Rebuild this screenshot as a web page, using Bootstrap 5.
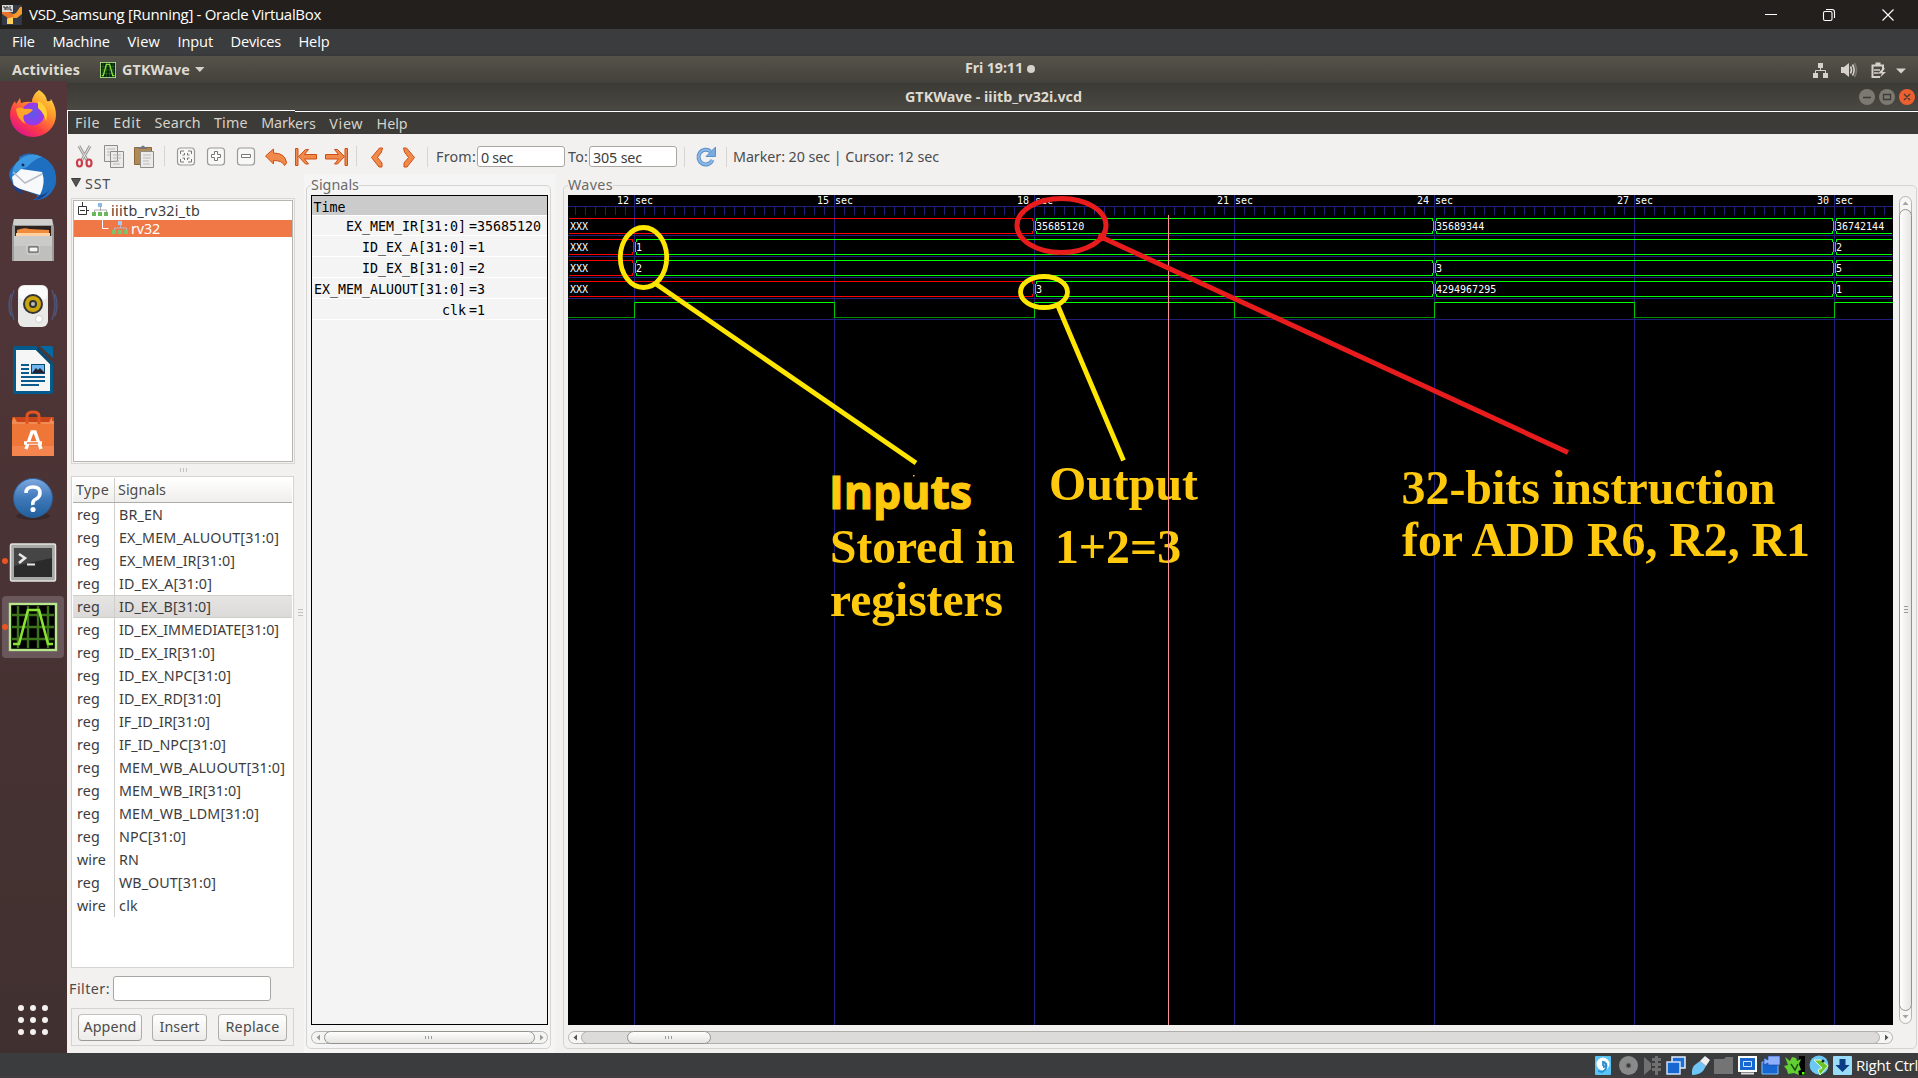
<!DOCTYPE html>
<html lang="en">
<head>
<meta charset="utf-8">
<title>VSD_Samsung [Running] - Oracle VirtualBox</title>
<link href="https://cdn.jsdelivr.net/npm/bootstrap@5.3.0/dist/css/bootstrap.min.css" rel="stylesheet">
<style>
html,body{height:100%;overflow:hidden}
body{font-family:"Noto Sans","Open Sans",sans-serif;font-size:14.3px;line-height:20px;color:#4c4c4c;background:#3b3c3e}
svg{display:block;flex:none}
.fit{display:block;flex:none;white-space:nowrap}
.host-title{height:29px;background:#231f1c;color:#fff;padding:0 23px 0 2px;font-family:"Open Sans",sans-serif;font-size:15px}
.host-title .fit{margin:-2px 0 0 7px}
.host-menu{height:27px;background:#3b3c3e;color:#fff;padding:0 0 1px 12px;gap:17.5px;border-bottom:2px solid #38393a;font-family:"Open Sans",sans-serif;font-size:14.6px}
.topbar{height:27px;background:linear-gradient(#56534a,#42413b);color:#dfdbd2;font-weight:700}
.topbar .side{width:965px;flex:none}
.guest{height:970px}
.launcher{width:67px;height:972px;margin-top:-2px;background:linear-gradient(#533639,#40302f 100%);flex:none}
.launcher svg{width:67px;height:64.2px}
.win-title{height:27px;background:linear-gradient(#3b3a35,#4a4842);color:#dfdbd2;font-weight:700}
.menu-strip{height:24px;color:#d6d2ca}
.menu-part{height:24px;background:#3c3b37;border-top:1px solid #fff;gap:13.3px}
.menu-part.one{width:228px;border-left:1px solid #fff;padding-left:7px;overflow:hidden}
.menu-part.two{margin-top:1px}
.tools{height:40px;background:#f2f1f0;padding:5px 0 0 8px}
.sep{width:1px;height:20px;background:#d8d6d3;flex:none}
.field{height:21px;background:#fff;border:1px solid #a9a7a3;border-radius:3px;line-height:21px;padding-left:3px;color:#3c3c3c;flex:none}
.work{background:#f2f1f0;min-height:0}
.left{width:237px;flex:none;padding-left:4px}
.tree{width:224px;height:266px;border:1px solid #d9d7d4;padding:1px;background:#f4f3f2;margin-top:4px}
.tree-in{height:262px;background:#fff;border:1px solid #b7b5b0;padding-top:1px}
.tree-in div{height:18px;line-height:18px;color:#3c3c3c}
.tree-in .sel{background:#f07746;color:#fff;height:17px;line-height:17px}
.siglist{width:223px;height:492px;border:1px solid #d6d4d1;background:#fff;padding:1px;color:#3c3c3c}
.sig-head{height:25px;background:linear-gradient(#fff,#efeeec);border-bottom:1px solid #aeaca6;color:#4c4c4c}
.sig-row{height:23px}
.c1{width:42px;padding-left:4px;border-right:1px solid #d0cecb;flex:none;height:100%;display:flex;align-items:center}
.sig-head .c1{padding-left:3px}
.c2{padding-left:4px;height:100%;display:flex;align-items:center}
.sig-head .c2{padding-left:3px}
.sig-row.on{background:linear-gradient(#e6e5e3,#dbdad8);border-top:1px solid #cfcecb;border-bottom:1px solid #cfcecb}
.actions{width:223px;height:38px;border:1px solid #d6d4d1;margin-top:7px;padding-left:6px}
.gbtn{height:27px;border:1px solid #b1afaa;border-color:#c4c2be #b1afaa #9c9a95;border-radius:4px;background:linear-gradient(#fff,#ecebe9);color:#4c4c4c;padding:0;display:flex;align-items:center;justify-content:center;font-size:14.3px;flex:none}
.pane-a{width:251px;background:#f5f5f5;padding:1px 4px 5px 2px;flex:none}
.pane-b{padding:1px 1px 5px 8px}
.legend{height:20px;line-height:20px;padding:0 1px 0 5px;color:#6a6a6a;position:relative;z-index:1}
.pane-a .legend .fit{background:#f5f5f5}
.pane-b .legend .fit{background:#f2f1f0}
.frame{border:1px solid #d6d4d1;border-radius:5px;margin-top:-10px;height:864px;padding:9px 3px 0 4px}
.sigbox{width:237px;height:830px;border:1px solid #000;background:#f4f4f4}
.hbar{height:13px;margin-top:6px}
.mono{font-family:"DejaVu Sans Mono",monospace;font-size:10px;fill:#fff}
.note{font-family:"Liberation Serif",serif;font-weight:700;font-size:49px;fill:#ffc90e}
.note .sans{font-family:"Open Sans",sans-serif;font-size:47px;stroke:#ffc90e;stroke-width:1.2px}
.status{height:24px;padding-left:1594px;color:#fff;font-family:"Open Sans",sans-serif;font-size:15px;overflow:hidden;border-bottom:1px solid #4a3b3d;gap:4px}
</style>
<script src="https://cdn.jsdelivr.net/npm/bootstrap@5.3.0/dist/js/bootstrap.bundle.min.js"></script>
</head>
<body class="d-flex flex-column">

<header class="host-title d-flex align-items-center flex-shrink-0">
  <svg width="20" height="20" viewBox="0 0 20 20"><rect width="20" height="20" fill="#323a48"/><path d="M5 19V14Q5 11 9 10L14 8L18 2H20V9L15 13H11V19Z" fill="#f59a2c"/><path d="M5 19V15Q7 12 11 12V19Z" fill="#ffd15c"/><path d="M0 5L10 8L12 12L6 13L0 9Z" fill="#e8742a"/><rect width="11" height="7" fill="#d9d9d9"/><path d="M1 2h2v3M4 5V2h2v3M8 1v4h2" stroke="#333" fill="none"/></svg>
  <span class="fit" data-w="292">VSD_Samsung [Running] - Oracle VirtualBox</span>
  <svg class="ms-auto" width="130" height="20" viewBox="1765 4 130 20" fill="none" stroke="#fff" stroke-width="1.1"><path d="M1765 13.500h12M1882.500 8.500l11 11M1893.500 8.500l-11 11"/><rect x="1823.500" y="10.500" width="8.500" height="9" rx="1.500"/><path d="M1826 8.500h6q2.500 0 2.500 2.500v6"/></svg>
</header>

<nav class="host-menu d-flex align-items-center flex-shrink-0">
  <span class="fit" data-w="23">File</span><span class="fit" data-w="57.500">Machine</span><span class="fit" data-w="32.500">View</span><span class="fit" data-w="35.500">Input</span><span class="fit" data-w="50.500">Devices</span><span class="fit" data-w="31">Help</span>
</nav>

<div class="topbar d-flex align-items-center flex-shrink-0">
  <div class="side d-flex align-items-center">
    <span class="fit" data-w="68" style="margin-left:12px">Activities</span>
    <svg style="margin-left:20px" width="16" height="16" viewBox="0 0 48 48"><rect x="1" y="1" width="46" height="46" fill="#021" stroke="#b6e98b" stroke-width="3"/><path d="M4 14h40M4 24h40M4 35h40M19 3v42M29 3v42M39 3v42M9 3v42" stroke="#39701c" stroke-width="2"/><path d="M5 41h5L19 7h10l9 34h6" stroke="#8ae234" stroke-width="4" fill="none"/></svg>
    <span class="fit" data-w="68" style="margin-left:6px">GTKWave</span>
    <svg style="margin-left:5px" width="10" height="5" viewBox="0 0 10 5"><path d="M0 0h9.500L4.800 5z" fill="#d6d2ca"/></svg>
  </div>
  <div class="d-flex align-items-center" style="margin-top:-4px"><span class="fit" data-w="58">Fri 19:11</span><svg width="14" height="12" viewBox="0 0 14 12"><circle cx="8" cy="7" r="4" fill="#d6d2ca"/></svg></div>
  <div class="ms-auto">
    <svg width="106" height="18" viewBox="1812 60 106 18"><g fill="#d6d2ca"><path d="M1818 62h5v5h-5zM1813 72h5v5h-5zM1823 72h5v5h-5zM1896 67.500h10l-5 5z"/><path d="M1841 66h3l5-4v14l-5-4h-3z"/></g><g fill="none" stroke="#d6d2ca" stroke-width="1.600"><path d="M1815.500 72v-2.500h10V72M1820.500 67v3" stroke-width="1"/><path d="M1850.500 65.500q2 3.500 0 7"/><path d="M1852.500 63.500q3.200 5.500 0 11"/><path d="M1854.500 62q4 7 0 14" stroke="#77756d"/><path d="M1880 76h-7.500V64.500h10.500v4M1875.500 62.500h5" stroke-width="2"/><path d="M1874 69h6M1874 72h4.500" /></g><path d="M1883 67l-5 5.500h4l-2 4 6-5.500h-3.500l2.500-4z" fill="#d6d2ca"/></svg>
  </div>
</div>

<div class="guest d-flex flex-shrink-0">
  <aside class="launcher d-flex flex-column">
    <svg viewBox="0 0 67 64.200">
      <defs><linearGradient id="ff" x1="1" y1="0" x2=".3" y2="1"><stop offset="0" stop-color="#fff44f"/><stop offset=".4" stop-color="#ff9a2a"/><stop offset=".75" stop-color="#ff3a47"/><stop offset="1" stop-color="#e0158a"/></linearGradient><radialGradient id="fp"><stop offset="0" stop-color="#5b5bea"/><stop offset="1" stop-color="#a034e8"/></radialGradient></defs>
      <path d="M39 9Q46 13 47 20Q51 21 51 18Q56 26 56 34A23 22 0 0 1 10 34Q10 26 15 20L16 23L20 17L21 22Q27 20 32 21Q32 14 39 9Z" fill="url(#ff)"/><circle cx="33" cy="33" r="11.500" fill="url(#fp)"/><path d="M16 28Q20 25 25 28Q30 27 33 29Q28 34 24 34Q22 38 26 43Q17 39 16 28Z" fill="#ffa52c"/><path d="M38 20Q50 26 46 40Q44 32 38 27Z" fill="#ffcf33"/></svg>
    <svg viewBox="0 0 67 64.200">
      <path d="M19 12Q26 7 33 9Q50 12 55 26Q59 40 50 49Q43 56 33 55Q38 53 37 50L15 42Q9 34 9 28Q12 20 19 17Z" fill="#1f6fc0"/><path d="M16 18Q28 5 42 12Q34 14 27 22Q18 24 12 32Q12 24 16 18Z" fill="#3a97e0"/><path d="M12 32L21 24L42 27Q46 38 40 50L14 42Z" fill="#f8f9fb"/><path d="M13 27L25 38L42 29" stroke="#b4bcc8" fill="none" stroke-width="1.500"/><path d="M12 39q4 9 11 10l-2-4zM40 50q8 0 12-10q-6 14-17 15z" fill="#1b3f8b"/><circle cx="23" cy="20" r="1.500" fill="#0b2c60"/></svg>
    <svg viewBox="0 0 67 64.200">
      <path d="M14 10h38l2 8v34H12V18z" fill="#9d9d9b"/><path d="M14 10h38l1 6H13z" fill="#cfcfcd"/><rect x="15" y="17" width="36" height="10" fill="#2d2320"/><path d="M17 21q8-3 12-1l20 1v6H17z" fill="#f08b3c"/><path d="M16 24h34v3H16z" fill="#ffd0a0"/><path d="M14 27h38v25H14z" fill="#bfbfbd"/><path d="M14 27h38v10H14z" fill="#cacac8"/><rect x="27" y="36" width="12" height="9" rx="2" fill="#a9a9a7" stroke="#dcdcdc"/><rect x="29" y="38" width="9" height="5" fill="#f4f4f4" stroke="#555"/></svg>
    <svg viewBox="0 0 67 64.200">
      <path d="M14 16q-6 14 0 30M11 20q-4 11 0 22M52 16q6 14 0 30M55 20q4 11 0 22" stroke="#4d5478" fill="none" stroke-width="1.500"/><rect x="18" y="11" width="30" height="42" rx="6" fill="#e9e9e7"/><rect x="19" y="12" width="28" height="14" rx="5" fill="#fbfbfb"/><circle cx="33" cy="30" r="10" fill="#333"/><circle cx="33" cy="30" r="8" fill="#c9a50e"/><circle cx="33" cy="30" r="4" fill="#333"/><circle cx="33" cy="30" r="2" fill="#bbb"/><circle cx="39" cy="45" r="3.500" fill="#fff" stroke="#ccc"/></svg>
    <svg viewBox="0 0 67 64.200">
      <path d="M15 8h21l17 17v29q0 2-2 2H15q-2 0-2-2V10q0-2 2-2z" fill="#055a8c"/><path d="M40 8h11q2 0 2 2v10z" fill="#0369a3"/><path d="M16 12h20l14 14v27H16z" fill="#f6f6f6"/><path d="M36 12l14 14h3L38 9z" fill="#0a4a70"/><path d="M21 27h8M21 31h8M21 35h8M21 39h24M21 43h24M21 47h18" stroke="#0b5b8d" stroke-width="2"/><rect x="31.500" y="26.500" width="13" height="9" fill="#6fb7ee" stroke="#0b4a70"/><path d="M32 35l4-5 2 2 2-2 5 5z" fill="#223"/></svg>
    <svg viewBox="0 0 67 64.200">
      <path d="M12 15h42v39H12z" fill="#ee7738"/><path d="M12 15h42v6H12z" fill="#c9461a"/><path d="M14 15l3 5h32l3-5v4h2v3H12v-3z" fill="#f28b52"/><path d="M12 44h42v10H12z" fill="#f4854f"/><path d="M27 22v-8q0-4 6-4t6 4v8" stroke="#df5420" stroke-width="3" fill="none"/><path d="M26 47L32 30h3L41 47M24 41h18" stroke="#fff" stroke-width="3.400" fill="none"/><path d="M27 41h11" stroke="#f07030" stroke-width="1.500"/></svg>
    <svg viewBox="0 0 67 64.200">
      <defs><linearGradient id="hp" x1="0" y1="0" x2="0" y2="1"><stop offset="0" stop-color="#7fa8e0"/><stop offset=".5" stop-color="#3f79ba"/><stop offset="1" stop-color="#215f9b"/></linearGradient></defs>
      <ellipse cx="33" cy="50" rx="17" ry="4" fill="#2e2224" opacity=".6"/><circle cx="33" cy="32" r="19.500" fill="url(#hp)" stroke="#2a5f97"/><path d="M26 27q0-6 7-6t7 6q0 4-4 6t-3 6" stroke="#fff" stroke-width="3.600" fill="none"/><circle cx="33" cy="43.500" r="2.600" fill="#fff"/></svg>
    <svg viewBox="0 0 67 64.200">
      <circle cx="5" cy="31" r="3" fill="#e95420"/><rect x="10.500" y="14" width="45" height="37" rx="1.500" fill="#a8a8a6" stroke="#e4e4e2" stroke-width="1.500"/><rect x="14" y="18" width="38" height="29" fill="#2b2b2b"/><path d="M14 18h38v10L14 36z" fill="#454545"/><path d="M19 24l6 4-6 5" stroke="#e8e8e6" stroke-width="2.600" fill="none"/><path d="M27 34.500h8" stroke="#e8e8e6" stroke-width="2"/></svg>
    <svg viewBox="0 0 67 64.200">
      <rect x="2" y="1" width="62" height="62" rx="4" fill="#6a575b"/><circle cx="5" cy="32" r="3" fill="#e95420"/><rect x="10" y="9" width="46" height="46" fill="#000" stroke="#b9e78d" stroke-width="2.400"/><path d="M12 20h42M12 32h42M12 44h42M28 11v42M38 11v42M48 11v42M18 11v42" stroke="#3d7419" stroke-width="2.400"/><path d="M13 49h6L28 15h11l9 34h5" stroke="#8ae234" stroke-width="2.600" fill="none"/></svg>
    <svg class="mt-auto" style="height:64px" viewBox="0 0 67 64"><g fill="#f2f1f0"><circle cx="21" cy="19" r="3"/><circle cx="33" cy="19" r="3"/><circle cx="45" cy="19" r="3"/><circle cx="21" cy="31" r="3"/><circle cx="33" cy="31" r="3"/><circle cx="45" cy="31" r="3"/><circle cx="21" cy="43" r="3"/><circle cx="33" cy="43" r="3"/><circle cx="45" cy="43" r="3"/></g></svg>
  </aside>

  <main class="d-flex flex-column flex-grow-1" style="min-width:0">
    <div class="win-title d-flex align-items-center justify-content-between flex-shrink-0">
      <span style="width:838px"></span><span class="fit" data-w="177">GTKWave - iiitb_rv32i.vcd</span>
      <div class="d-flex justify-content-end" style="width:836px"><svg width="60" height="18" viewBox="1858 88 60 18"><circle cx="1867" cy="97" r="8" fill="#7c7972"/><circle cx="1887" cy="97" r="8" fill="#7c7972"/><circle cx="1907" cy="97" r="8" fill="#ee5f30"/><path d="M1863 97.500h8M1883.500 94.500h7v5h-7zM1904 94l6 6M1910 94l-6 6" stroke="#3c3b37" fill="none" stroke-width="1.300"/></svg></div>
    </div>
    <nav class="menu-strip d-flex flex-shrink-0">
      <div class="menu-part one d-flex align-items-center"><span class="fit" data-w="25">File</span><span class="fit" data-w="28">Edit</span><span class="fit" data-w="46">Search</span><span class="fit" data-w="34">Time</span><span class="fit" data-w="34">Mark</span></div>
      <div class="menu-part two d-flex align-items-center flex-grow-1"><span class="fit" data-w="21">ers</span><span class="fit" data-w="34">View</span><span class="fit" data-w="31">Help</span></div>
    </nav>
    <div class="tools d-flex flex-shrink-0 align-items-center">
      <svg width="352" height="24" viewBox="75 145 352 24">
        <g fill="none">
        <path d="M79 146l8 14M90 146l-8 14" stroke="#9b9b99" stroke-width="3"/><path d="M79 146l8 14M90 146l-8 14" stroke="#e4e4e2" stroke-width="1"/><ellipse cx="79.500" cy="163" rx="2.500" ry="3.500" stroke="#c9404c" stroke-width="2.200"/><ellipse cx="89" cy="163" rx="2.500" ry="3.500" stroke="#c9404c" stroke-width="2.200"/>
        <g fill="#ecebe9" stroke="#8d8d89"><path d="M104.500 145.500h13v16h-13zM110.500 151.500h13v16h-13z"/><path d="M107 149h8M107 152h3M107 155h3M113 155h8M113 158h8M113 161h6M113 164h7" stroke="#b9b9b6"/></g>
        <path d="M134.500 147.500h17v17h-17z" fill="#b08a56" stroke="#8a6738"/><path d="M138 149v-2h3q2-3 4 0h2v2z" fill="#777"/><path d="M140.500 151.500h13v16h-13z" fill="#ecebe9" stroke="#8d8d89"/><path d="M143 155h8M143 158h8M143 161h6M143 164h7" stroke="#b9b9b6"/>
        <path d="M164.500 146v20M356.500 146v20" stroke="#d8d6d3"/>
        <g fill="#f8f8f7" stroke="#9a9a97" stroke-width="1.200"><rect x="177.500" y="148" width="17" height="17" rx="3"/><rect x="207.500" y="148" width="17" height="17" rx="3"/><rect x="237.500" y="148" width="17" height="17" rx="3"/></g>
        <path d="M180.500 154v-3h3.500M188 151h3.500v3M180.500 159v3h3.500M188 162h3.500v-3M184.500 153v2h-2M187.500 153v2h2M184.500 160v-2h-2M187.500 160v-2h2" stroke="#777774" stroke-width="1"/>
        <path d="M214.500 151.500h3v3h3v3h-3v3h-3v-3h-3v-3h3zM241.500 154.500h9v3h-9z" fill="#fff" stroke="#777774"/>
        <g stroke="#cf4f16" stroke-width="1" stroke-linejoin="round"><path d="M265.500 156l8-7v4q12 0 13 10l-2 2.500q-2-5-11-5v3.500zM298.500 156.500l7-7h3l-4 5h12v4.500h-12l4 5h-3zM295.500 148.500h2.500v17h-2.500zM344.500 156.500l-7-7h-3l4 5h-13v4.500h13l-4 5h3zM345 148.500h2.500v17h-2.500zM371.500 157.500l8-9.500h3l-1 4-4 5.500 4.500 5.500v4h-3zM414.500 157.500l-8-9.500h-3l1 4 4 5.500-4.500 5.500v4h3z" fill="#f08a4b"/></g>
        </g></svg>
      <span class="sep"></span>
      <span class="fit" data-w="40" style="margin-left:8px">From:</span>
      <span class="field" style="width:88px;margin-left:1px"><span class="fit" data-w="32">0 sec</span></span>
      <span class="fit" data-w="20" style="margin-left:3px">To:</span>
      <span class="field" style="width:88px;margin-left:1px"><span class="fit" data-w="49">305 sec</span></span>
      <span class="sep" style="margin-left:7px"></span>
      <svg style="margin-left:10px" width="22" height="22" viewBox="0 0 22 22"><path d="M15.500 5.500A7.300 7.300 0 1 0 17.500 14" fill="none" stroke="#5b8fc9" stroke-width="4"/><path d="M15.500 5.500A7.300 7.300 0 1 0 17.500 14" fill="none" stroke="#8db9e6" stroke-width="2"/><path d="M20.500 1v9.500h-9.500z" fill="#7aabde" stroke="#5b8fc9"/></svg>
      <span class="sep" style="margin-left:9px"></span>
      <span class="fit" data-w="206" style="margin-left:6px">Marker: 20 sec | Cursor: 12 sec</span>
    </div>

    <div class="work d-flex flex-grow-1">
      <section class="left">
        <div class="d-flex align-items-center"><svg width="10" height="16" viewBox="0 0 10 16"><path d="M0.500 2.500h9l-4.500 8z" fill="#555" stroke="#3c3c3c"/></svg><span class="fit" data-w="26" style="margin-left:4px">SST</span></div>
        <div class="tree"><div class="tree-in">
          <div class="d-flex"><svg width="37" height="18" viewBox="74 202 37 18"><path d="M82.500 202v4M78.500 206.500h8v8h-8zM80 210.500h5M87 210.500h2" stroke="#333" fill="none"/><path d="M100.500 206v5M94.500 213v-3h12v3" stroke="#aaa" fill="none"/><rect x="98" y="203" width="4" height="4" fill="#8db9e6"/><path d="M92 212h4v4h-4zM98 212h4v4h-4zM104 212h4v4h-4z" fill="#69b85c"/></svg><span class="fit" data-w="89">iiitb_rv32i_tb</span></div>
          <div class="d-flex sel"><svg width="57" height="17" viewBox="74 220 57 17"><path d="M102.500 220v8.500h6" stroke="#fff" fill="none"/><path d="M120.500 224v4M114.500 231v-3h12v3" stroke="#bbb" fill="none"/><rect x="118" y="221" width="4" height="4" fill="#a5cbf0"/><path d="M112 230h4v4h-4zM118 230h4v4h-4zM124 230h4v4h-4z" fill="#7cc26c"/></svg><span class="fit" data-w="29">rv32</span></div>
        </div></div>
        <svg width="223" height="12" viewBox="71 464 223 12"><path d="M180.500 468v4M183.500 468v4M186.500 468v4" stroke="#c4c2be"/></svg>
        <div class="siglist">
          <div class="sig-head d-flex"><div class="c1"><span class="fit" data-w="33">Type</span></div><div class="c2"><span class="fit" data-w="48">Signals</span></div></div>
          <div class="sig-row d-flex"><div class="c1"><span class="fit" data-w="23">reg</span></div><div class="c2"><span class="fit" data-w="44">BR_EN</span></div></div>
          <div class="sig-row d-flex"><div class="c1"><span class="fit" data-w="23">reg</span></div><div class="c2"><span class="fit" data-w="160">EX_MEM_ALUOUT[31:0]</span></div></div>
          <div class="sig-row d-flex"><div class="c1"><span class="fit" data-w="23">reg</span></div><div class="c2"><span class="fit" data-w="116">EX_MEM_IR[31:0]</span></div></div>
          <div class="sig-row d-flex"><div class="c1"><span class="fit" data-w="23">reg</span></div><div class="c2"><span class="fit" data-w="93">ID_EX_A[31:0]</span></div></div>
          <div class="sig-row d-flex on"><div class="c1"><span class="fit" data-w="23">reg</span></div><div class="c2"><span class="fit" data-w="92">ID_EX_B[31:0]</span></div></div>
          <div class="sig-row d-flex"><div class="c1"><span class="fit" data-w="23">reg</span></div><div class="c2"><span class="fit" data-w="160">ID_EX_IMMEDIATE[31:0]</span></div></div>
          <div class="sig-row d-flex"><div class="c1"><span class="fit" data-w="23">reg</span></div><div class="c2"><span class="fit" data-w="96">ID_EX_IR[31:0]</span></div></div>
          <div class="sig-row d-flex"><div class="c1"><span class="fit" data-w="23">reg</span></div><div class="c2"><span class="fit" data-w="112">ID_EX_NPC[31:0]</span></div></div>
          <div class="sig-row d-flex"><div class="c1"><span class="fit" data-w="23">reg</span></div><div class="c2"><span class="fit" data-w="102">ID_EX_RD[31:0]</span></div></div>
          <div class="sig-row d-flex"><div class="c1"><span class="fit" data-w="23">reg</span></div><div class="c2"><span class="fit" data-w="91">IF_ID_IR[31:0]</span></div></div>
          <div class="sig-row d-flex"><div class="c1"><span class="fit" data-w="23">reg</span></div><div class="c2"><span class="fit" data-w="107">IF_ID_NPC[31:0]</span></div></div>
          <div class="sig-row d-flex"><div class="c1"><span class="fit" data-w="23">reg</span></div><div class="c2"><span class="fit" data-w="166">MEM_WB_ALUOUT[31:0]</span></div></div>
          <div class="sig-row d-flex"><div class="c1"><span class="fit" data-w="23">reg</span></div><div class="c2"><span class="fit" data-w="122">MEM_WB_IR[31:0]</span></div></div>
          <div class="sig-row d-flex"><div class="c1"><span class="fit" data-w="23">reg</span></div><div class="c2"><span class="fit" data-w="140">MEM_WB_LDM[31:0]</span></div></div>
          <div class="sig-row d-flex"><div class="c1"><span class="fit" data-w="23">reg</span></div><div class="c2"><span class="fit" data-w="67">NPC[31:0]</span></div></div>
          <div class="sig-row d-flex"><div class="c1"><span class="fit" data-w="29">wire</span></div><div class="c2"><span class="fit" data-w="20">RN</span></div></div>
          <div class="sig-row d-flex"><div class="c1"><span class="fit" data-w="23">reg</span></div><div class="c2"><span class="fit" data-w="97">WB_OUT[31:0]</span></div></div>
          <div class="sig-row d-flex"><div class="c1"><span class="fit" data-w="29">wire</span></div><div class="c2"><span class="fit" data-w="19">clk</span></div></div>
        </div>
        <div class="d-flex align-items-center" style="margin:8px 0 0 -2px"><span class="fit" data-w="41">Filter:</span><span class="field" style="width:158px;height:25px;margin-left:3px"></span></div>
        <div class="actions d-flex align-items-center"><button class="gbtn" style="width:64px"><span class="fit" data-w="53">Append</span></button><button class="gbtn" style="width:55px;margin-left:10px"><span class="fit" data-w="40">Insert</span></button><button class="gbtn" style="width:69px;margin-left:11px"><span class="fit" data-w="54">Replace</span></button></div>
      </section>

      <svg style="width:8px;margin:435px 0 0 -8px" height="8" viewBox="0 0 8 8"><path d="M2 .500h5M2 3.500h5M2 6.500h5" stroke="#c4c2be"/></svg>

      <section class="pane-a">
        <div class="legend d-flex"><span class="fit" data-w="48">Signals</span></div>
        <div class="frame">
          <div class="sigbox"><svg width="235" height="828" viewBox="312 196 235 828">
            <rect x="312" y="196" width="235" height="19" fill="#cbcbcb"/>
            <path d="M312 215.500h235M312 235.500h235M312 256.500h235M312 277.500h235M312 298.500h235M312 319.500h235" stroke="#fff"/>
            <g font-family="DejaVu Sans Mono, monospace" font-size="13.300" fill="#000">
              <text x="313.500" y="212">Time</text>
              <g text-anchor="end"><text x="466" y="231">EX_MEM_IR[31:0]</text><text x="466" y="252">ID_EX_A[31:0]</text><text x="466" y="273">ID_EX_B[31:0]</text><text x="466" y="294">EX_MEM_ALUOUT[31:0]</text><text x="466" y="315">clk</text></g>
              <text x="469" y="231">=35685120</text><text x="469" y="252">=1</text><text x="469" y="273">=2</text><text x="469" y="294">=3</text><text x="469" y="315">=1</text>
            </g></svg></div>
          <svg class="hbar" width="237" height="13" viewBox="0 0 237 13"><defs><linearGradient id="th" x1="0" y1="0" x2="0" y2="1"><stop offset="0" stop-color="#fff"/><stop offset="1" stop-color="#e4e3e1"/></linearGradient></defs><rect x=".500" y=".500" width="236" height="12" rx="6" fill="#f4f4f3" stroke="#b5b3af"/><rect x="13.500" y=".500" width="210" height="12" rx="6" fill="url(#th)" stroke="#94928d"/><path d="M114.500 5v3M117.500 5v3M120.500 5v3" stroke="#999"/><path d="M9 3.500v6l-3.500-3zM229 3.500v6l3.500-3z" fill="#999"/></svg>
        </div>
      </section>

      <section class="pane-b flex-grow-1">
        <div class="legend d-flex"><span class="fit" data-w="45">Waves</span></div>
        <div class="frame">
          <div class="d-flex">
          <svg width="1325" height="830" viewBox="568 195 1325 830" style="background:#000">
            <g class="mono">
              <text x="617" y="204">12 sec</text><text x="817" y="204">15 sec</text><text x="1017" y="204">18 sec</text><text x="1217" y="204">21 sec</text><text x="1417" y="204">24 sec</text><text x="1617" y="204">27 sec</text><text x="1817" y="204">30 sec</text>
            </g>
            <g shape-rendering="crispEdges" fill="none" stroke="#20207c">
              <path d="M568 206.500h1325M568 235.500h1325M568 256.500h1325M568 277.500h1325M568 298.500h1325M568 319.500h1325"/>
              <path d="M634.500 195v830M834.500 195v830M1034.500 195v830M1234.500 195v830M1434.500 195v830M1634.500 195v830M1834.500 195v830"/>
              <path d="M575 210.500h59M644 210.500h1249" stroke-width="8" stroke-dasharray="1 9"/>
            </g>
            <g class="note">
              <text class="sans" x="829" y="508.500" textLength="143" lengthAdjust="spacingAndGlyphs">Inputs</text>
              <text x="830" y="563" textLength="185" lengthAdjust="spacingAndGlyphs">Stored in</text>
              <text x="830" y="616" textLength="173" lengthAdjust="spacingAndGlyphs">registers</text>
              <text x="1049" y="499.500" textLength="149" lengthAdjust="spacingAndGlyphs">Output</text>
              <text x="1055" y="562.500" textLength="126" lengthAdjust="spacingAndGlyphs">1+2=3</text>
              <text x="1401.500" y="503.500" textLength="374" lengthAdjust="spacingAndGlyphs">32-bits instruction</text>
              <text x="1402" y="556" textLength="408" lengthAdjust="spacingAndGlyphs">for ADD R6, R2, R1</text>
            </g>
            <g shape-rendering="crispEdges" fill="none" stroke-width="1">
              <g stroke="#f00">
                <path d="M569 218.500H1032.500L1034 226L1032.500 233.500H569"/>
                <path d="M569 239.500H632.500L634 247L632.500 254.500H569"/>
                <path d="M569 260.500H632.500L634 268L632.500 275.500H569"/>
                <path d="M569 281.500H1032.500L1034 289L1032.500 296.500H569"/>
              </g>
              <g stroke="#0f0">
                <path d="M1432.500 218.500H1036.500L1035 226L1036.500 233.500H1432.500L1434 226zM1832.500 218.500H1436.500L1435 226L1436.500 233.500H1832.500L1834 226zM1892 218.500H1836.500L1835 226L1836.500 233.500H1892"/>
                <path d="M1832.500 239.500H636.500L635 247L636.500 254.500H1832.500L1834 247zM1892 239.500H1836.500L1835 247L1836.500 254.500H1892"/>
                <path d="M1432.500 260.500H636.500L635 268L636.500 275.500H1432.500L1434 268zM1832.500 260.500H1436.500L1435 268L1436.500 275.500H1832.500L1834 268zM1892 260.500H1836.500L1835 268L1836.500 275.500H1892"/>
                <path d="M1432.500 281.500H1036.500L1035 289L1036.500 296.500H1432.500L1434 289zM1832.500 281.500H1436.500L1435 289L1436.500 296.500H1832.500L1834 289zM1892 281.500H1836.500L1835 289L1836.500 296.500H1892"/>
                <path d="M634 302.500h201M1034 302.500h201M1434 302.500h201M1834 302.500h59"/>
              </g>
              <path stroke="#008a00" d="M568 317.500h66M835 317.500h199M1235 317.500h199M1635 317.500h199"/>
              <path stroke="#00c800" d="M634.500 302v16M834.500 302v16M1034.500 302v16M1234.500 302v16M1434.500 302v16M1634.500 302v16M1834.500 302v16"/>
              <path stroke="#ff9494" d="M1168.500 215V1025"/>
            </g>
            <g class="mono">
              <text x="570" y="230">XXX</text><text x="570" y="251">XXX</text><text x="570" y="272">XXX</text><text x="570" y="293">XXX</text>
              <text x="1036" y="230">35685120</text><text x="1436" y="230">35689344</text><text x="1836" y="230">36742144</text>
              <text x="636" y="251">1</text><text x="1836" y="251">2</text>
              <text x="636" y="272">2</text><text x="1436" y="272">3</text><text x="1836" y="272">5</text>
              <text x="1036" y="293">3</text><text x="1436" y="293">4294967295</text><text x="1836" y="293">1</text>
            </g>
            <g fill="none" stroke="#ffe600" stroke-width="4.800"><ellipse cx="643.500" cy="257.500" rx="23.200" ry="30"/><path d="M656 284L916 463M1058 306L1123.500 460.500"/><ellipse cx="1044" cy="292" rx="23.500" ry="15.500"/></g>
            <g fill="none" stroke="#e81c1c" stroke-width="5"><ellipse cx="1061.500" cy="225.500" rx="44.500" ry="27"/><path d="M1101 237L1568 452.500"/></g><circle cx="1102" cy="237" r="4" fill="#e81c1c"/>
            <rect x="913" y="475" width="1.500" height="1.500" fill="#ffc90e"/>
          </svg>
          <svg style="margin:1px 0 0 6px" width="13" height="828" viewBox="0 0 13 828"><defs><linearGradient id="tv"><stop offset="0" stop-color="#fff"/><stop offset="1" stop-color="#e4e3e1"/></linearGradient></defs><rect x=".500" y=".500" width="12" height="827" rx="6" fill="#f6f6f5" stroke="#b5b3af"/><rect x=".500" y="13.500" width="12" height="801" rx="6" fill="url(#tv)" stroke="#94928d"/><path d="M3.500 9h6l-3-3.500zM3.500 819h6l-3 3.500z" fill="#a5a3a0"/><path d="M5 410.500h4M5 413.500h4M5 416.500h4" stroke="#999"/></svg>
          </div>
          <svg class="hbar" width="1325" height="13" viewBox="0 0 1325 13"><rect x=".500" y=".500" width="1324" height="12" rx="6" fill="#f6f6f5" stroke="#b5b3af"/><rect x="13.500" y=".500" width="1298" height="12" rx="6" fill="#dcdbd9" stroke="#b1afab"/><rect x="59.500" y=".500" width="83" height="12" rx="6" fill="url(#th)" stroke="#94928d"/><path d="M97.500 5v3M100.500 5v3M103.500 5v3" stroke="#999"/><path d="M9 3.500v6l-3.500-3zM1317 3.500v6l3.500-3z" fill="#555"/></svg>
        </div>
      </section>
    </div>
  </main>
</div>

<footer class="status d-flex align-items-center flex-shrink-0">
  <svg width="260" height="22" viewBox="1594 1055 260 22">
    <rect x="1595" y="1057" width="16" height="19" rx="1" fill="#5cc4f4"/><circle cx="1603" cy="1065" r="6.500" fill="#fff"/><path d="M1603 1067V1063a2.500 2.500 0 1 1 0 5M1606 1064q2 6-4 9l-4-1" stroke="#2c8fd6" stroke-width="1.800" fill="none"/>
    <circle cx="1628.500" cy="1066.500" r="9.500" fill="#8a8a8a"/><circle cx="1628.500" cy="1066.500" r="2.500" fill="#3b3c3e" stroke="#777"/>
    <path d="M1644 1058l7 6v6l-7 6zM1652 1059h9v3h-9zM1652 1064h9v3h-9zM1652 1069h9v3h-9zM1655 1057h3v19h-3z" fill="#707070"/>
    <path d="M1672 1058h13v11h-13z" fill="#1c6fd6" stroke="#e8eefc" stroke-width="1.500"/><path d="M1667 1063h13v12h-13z" fill="#1667d2" stroke="#cfe0fa" stroke-width="1.500"/>
    <path d="M1692 1076q-1-8 4-11l4-3 6 5-3 5q-4 4-11 4z" fill="#6fc5f5"/><path d="M1700 1062l5-5 5 4-4 6z" fill="#eee"/>
    <path d="M1714 1060h10l2-2h7v17h-19z" fill="#747474"/>
    <path d="M1739 1058h17v14h-17z" fill="#1667d2" stroke="#fff" stroke-width="2"/><path d="M1743.500 1062.500h8v5h-8z" fill="none" stroke="#cfe6ff"/><path d="M1741 1074.500h13" stroke="#ddd" stroke-width="2"/>
    <path d="M1762 1063h16v12h-16z" fill="#1667d2" stroke="#7cc0ff"/><path d="M1764 1059l4 2v-4h12v9h-12v-2l-4 2z" fill="#8fb0ff" stroke="#1a3f9a" stroke-width=".600"/>
    <rect x="1799" y="1057" width="6" height="19" fill="#000"/><path d="M1802 1073h2.500v2.500h-2.500z" fill="#5f0"/><path d="M1785 1058l5 4 2-4 4 1 1 3 4-2-2 5 2 6-3 1 1 4-5-2-6 1-1-4-3-4 4-1z" fill="#62d032"/><path d="M1791 1065l4 6 3-6" stroke="#164d0e" stroke-width="1.400" fill="none"/>
    <circle cx="1819" cy="1066" r="9.500" fill="#6cc8f4"/><path d="M1814 1061h7l7 6-8 9-2-5 4-2z" fill="#6cc52c" stroke="#e3ffd0"/><circle cx="1823" cy="1062" r="1.500" fill="#123"/>
    <rect x="1833" y="1057" width="19" height="19" rx="1" fill="#9bdcf8"/><path d="M1839.500 1060h6v6h4l-7 7-7-7h4z" fill="#0b3c84"/>
  </svg>
  <span class="fit" data-w="62" style="margin-left:-2px">Right Ctrl</span>
</footer>

<script>
/* Tracks each label so that it fills its nominal width. */
document.querySelectorAll('.fit').forEach(function (el) {
  var w = parseFloat(el.dataset.w), r = document.createRange();
  r.selectNodeContents(el);
  var d = (w - r.getBoundingClientRect().width) / el.textContent.length;
  el.style.letterSpacing = d.toFixed(3) + 'px';
  el.style.width = w + 'px';
});
</script>
</body>
</html>
